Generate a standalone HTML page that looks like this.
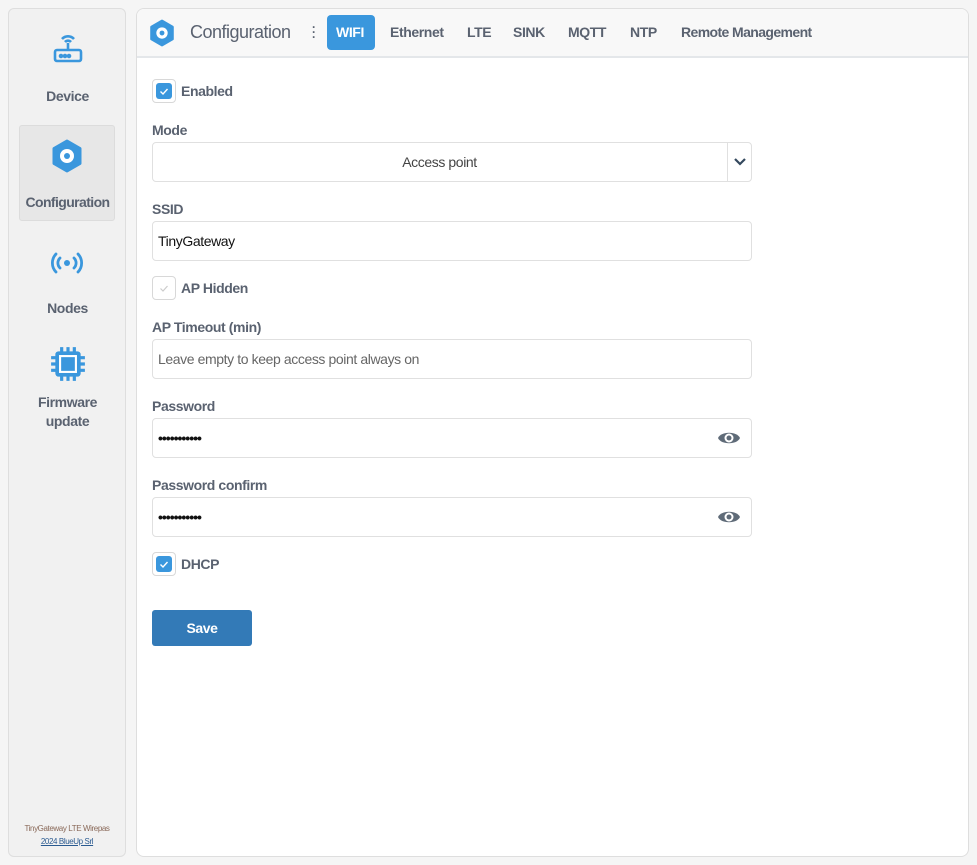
<!DOCTYPE html><html><head><style>
*{box-sizing:border-box;margin:0;padding:0}
body{width:977px;height:865px;background:#f5f5f5;font-family:"Liberation Sans",sans-serif;color:#555c66;position:relative;overflow:hidden;letter-spacing:-0.4px}
.abs{position:absolute}
.side{left:8px;top:8px;width:118px;height:849px;background:#f1f1f1;border:1px solid #dedede;border-radius:6px}
.nav{position:absolute;left:11px;width:95px;text-align:center;font-weight:bold;font-size:14px;color:#5a6270}
.main{left:136px;top:8px;width:833px;height:849px;background:#fff;border:1px solid #dedede;border-radius:8px;overflow:hidden}
.hdr{position:absolute;left:0;top:0;width:100%;height:49px;background:#f8f8f8;border-bottom:2px solid #e4e7ea}
.tab{position:absolute;top:15px;font-weight:bold;font-size:14px;color:#5a6270}
.lbl{position:absolute;left:15px;font-weight:bold;font-size:14px;color:#5a6270}
.inp{position:absolute;left:15px;width:600px;height:40px;border:1px solid #e0e0e0;border-radius:4px;font-size:14px;padding:11px 5px;color:#111}
.cb{position:absolute;left:15px;width:24px;height:24px;border:1px solid #d8d8d8;border-radius:4px;background:#fff}
.cb i{position:absolute;left:3px;top:3px;width:16px;height:16px;background:#3a97dd;border-radius:3px}
.cb svg{position:absolute;left:3px;top:3px}
.eye{position:absolute;right:10px;top:10px}
</style></head><body>
<div class="abs side">
 <svg class="abs" style="left:42px;top:22px" width="34" height="34" viewBox="0 0 32 34" fill="none" stroke="#3a97dd" stroke-width="2.6"><path d="M10 8a8 8 0 0 1 12 0M13 11a4 4 0 0 1 6 0"/><path d="M16 12v8"/><rect x="3" y="19" width="26" height="11" rx="2"/><circle cx="9" cy="25" r="1" fill="#3a97dd"/><circle cx="13" cy="25" r="1" fill="#3a97dd"/><circle cx="17" cy="25" r="1" fill="#3a97dd"/></svg>
 <div class="nav" style="top:79px">Device</div>
 <div class="abs" style="left:10px;top:116px;width:96px;height:96px;background:#e7e7e7;border:1px solid #dcdcdc;border-radius:3px"></div>
 <svg class="abs" style="left:42px;top:130px" width="32" height="34" viewBox="0 0 32 34"><path d="M16 2l13 7.5v15L16 32 3 24.5v-15z" fill="#3a97dd" stroke="#3a97dd" stroke-width="3" stroke-linejoin="round"/><circle cx="16" cy="17" r="7" fill="#fff"/><circle cx="16" cy="17" r="3" fill="#3a97dd"/></svg>
 <div class="nav" style="top:185px;letter-spacing:-0.6px">Configuration</div>
 <svg class="abs" style="left:40px;top:241px" width="36" height="26" viewBox="0 0 36 24" fill="none" stroke="#3a97dd" stroke-width="2.8" stroke-linecap="round"><path d="M7 3a13 13 0 0 0 0 18M11 7a7 7 0 0 0 0 10M29 3a13 13 0 0 1 0 18M25 7a7 7 0 0 1 0 10"/><circle cx="18" cy="12" r="3" fill="#3a97dd" stroke="none"/></svg>
 <div class="nav" style="top:291px">Nodes</div>
 <svg class="abs" style="left:40px;top:336px" width="38" height="38" viewBox="0 0 36 36"><g stroke="#3a97dd" stroke-width="3"><path d="M12 2v6M18 2v6M24 2v6M12 28v6M18 28v6M24 28v6M2 12h6M2 18h6M2 24h6M28 12h6M28 18h6M28 24h6"/></g><rect x="6" y="6" width="24" height="24" rx="3" fill="#3a97dd"/><rect x="9.5" y="9.5" width="17" height="17" fill="#fff"/><rect x="11.5" y="11.5" width="13" height="13" fill="#3a97dd"/></svg>
 <div class="nav" style="top:384px;line-height:19px">Firmware<br>update</div>
 <div class="abs" style="left:0;top:815px;width:116px;text-align:center;font-size:8px;color:#8a6a5a;letter-spacing:-0.4px">TinyGateway LTE Wirepas</div>
 <div class="abs" style="left:0;top:828px;width:116px;text-align:center;font-size:8px;color:#2a5a90;text-decoration:underline;letter-spacing:-0.4px">2024 BlueUp Srl</div>
</div>
<div class="abs main">
 <div class="hdr">
  <svg class="abs" style="left:12px;top:10px" width="26" height="28" viewBox="0 0 32 34"><path d="M16 2l13 7.5v15L16 32 3 24.5v-15z" fill="#3a97dd" stroke="#3a97dd" stroke-width="3" stroke-linejoin="round"/><circle cx="16" cy="17" r="7" fill="#fff"/><circle cx="16" cy="17" r="3" fill="#3a97dd"/></svg>
  <div class="abs" style="left:53px;top:13px;font-size:18px;color:#5a6270;letter-spacing:-0.5px">Configuration</div>
  <div class="abs" style="left:175px;top:16px;width:3px;font-size:12px;line-height:5px;color:#5a6270;font-weight:bold">·<br>·<br>·</div>
  <div class="abs" style="left:190px;top:6px;width:48px;height:35px;background:#3a97dd;border-radius:4px"></div>
  <div class="tab" style="left:199px;color:#fff">WIFI</div>
  <div class="tab" style="left:253px">Ethernet</div>
  <div class="tab" style="left:330px">LTE</div>
  <div class="tab" style="left:376px">SINK</div>
  <div class="tab" style="left:431px">MQTT</div>
  <div class="tab" style="left:493px">NTP</div>
  <div class="tab" style="left:544px;letter-spacing:-0.6px">Remote Management</div>
 </div>
 <div class="cb" style="top:70px"><i></i><svg width="16" height="16"><path d="M4.5 8.5l2.5 2.5 4.5-5" stroke="#fff" stroke-width="1.4" fill="none"/></svg></div>
 <div class="lbl" style="top:74px;left:44px">Enabled</div>
 <div class="lbl" style="top:113px">Mode</div>
 <div class="inp" style="top:133px;text-align:center;color:#444;padding-right:30px">Access point<div class="abs" style="left:574px;top:0;width:1px;height:38px;background:#e0e0e0"></div><svg class="abs" style="left:580px;top:14px" width="14" height="10"><path d="M2 2l5 5 5-5" stroke="#34495e" stroke-width="2.2" fill="none"/></svg></div>
 <div class="lbl" style="top:192px">SSID</div>
 <div class="inp" style="top:212px">TinyGateway</div>
 <div class="cb" style="top:267px"><svg width="16" height="16"><path d="M4.5 8.5l2.5 2.5 4.5-5" stroke="#ccc" stroke-width="1.2" fill="none"/></svg></div>
 <div class="lbl" style="top:271px;left:44px">AP Hidden</div>
 <div class="lbl" style="top:310px">AP Timeout (min)</div>
 <div class="inp" style="top:330px;color:#666">Leave empty to keep access point always on</div>
 <div class="lbl" style="top:389px">Password</div>
 <div class="inp" style="top:409px;font-weight:bold;letter-spacing:-1px">•••••••••••<svg class="eye" width="24" height="18" viewBox="0 0 24 18"><path d="M1 9C4 2 20 2 23 9 20 16 4 16 1 9z" fill="#5f6b78"/><circle cx="12" cy="9" r="4.5" fill="#fff"/><circle cx="12" cy="9" r="2.5" fill="#5f6b78"/></svg></div>
 <div class="lbl" style="top:468px">Password confirm</div>
 <div class="inp" style="top:488px;font-weight:bold;letter-spacing:-1px">•••••••••••<svg class="eye" width="24" height="18" viewBox="0 0 24 18"><path d="M1 9C4 2 20 2 23 9 20 16 4 16 1 9z" fill="#5f6b78"/><circle cx="12" cy="9" r="4.5" fill="#fff"/><circle cx="12" cy="9" r="2.5" fill="#5f6b78"/></svg></div>
 <div class="cb" style="top:543px"><i></i><svg width="16" height="16"><path d="M4.5 8.5l2.5 2.5 4.5-5" stroke="#fff" stroke-width="1.4" fill="none"/></svg></div>
 <div class="lbl" style="top:547px;left:44px">DHCP</div>
 <div class="abs" style="left:15px;top:601px;width:100px;height:36px;background:#337ab7;border-radius:3px;color:#fff;font-weight:bold;font-size:14px;text-align:center;line-height:36px">Save</div>
</div>
</body></html>
